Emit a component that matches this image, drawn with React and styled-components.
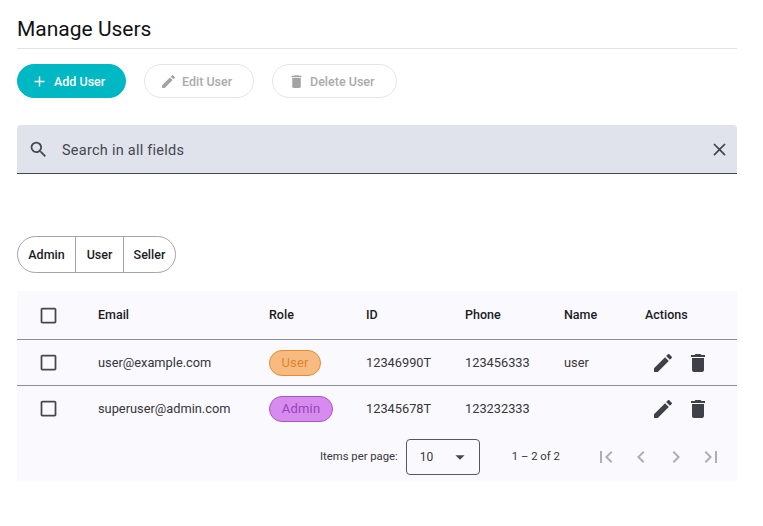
import React from 'react'
import styled, { createGlobalStyle } from 'styled-components'
import {
	MdAdd,
	MdArrowDropDown,
	MdCheckBoxOutlineBlank,
	MdChevronLeft,
	MdChevronRight,
	MdClose,
	MdDelete,
	MdEdit,
	MdFirstPage,
	MdLastPage,
	MdSearch,
} from 'react-icons/md'

const GlobalStyle = createGlobalStyle`
	html, body {
		margin: 0;
		background: #ffffff;
		font-family: Roboto, 'Liberation Sans', sans-serif;
	}
	* {
		box-sizing: border-box;
	}
`

const Page = styled.div`
	width: 763px;
	height: 526px;
	padding: 15px 26px 0 17px;
	overflow: hidden;
`

const Title = styled.h1`
	margin: 0;
	height: 34px;
	border-bottom: 1px solid #e3e3e6;
	font-size: 21px;
	line-height: 28px;
	font-weight: 400;
	color: #111114;
`

const Toolbar = styled.div`
	display: flex;
	gap: 18px;
	margin-top: 15px;
`

const ActionButton = styled.button`
	display: flex;
	align-items: center;
	height: 34px;
	width: ${props => props.$width}px;
	padding: 0 0 0 ${props => props.$pad}px;
	gap: ${props => props.$gap}px;
	border-radius: 17px;
	border: 1px solid ${props => (props.$primary ? '#00b8c4' : '#e6e6e9')};
	background: ${props => (props.$primary ? '#00b8c4' : '#ffffff')};
	color: ${props => (props.$primary ? '#ffffff' : '#aaaaad')};
	font-family: inherit;
	font-size: 12.5px;
	font-weight: 500;

	svg {
		font-size: 17px;
		color: ${props => (props.$primary ? '#ffffff' : '#a3a3a6')};
	}
`

const SearchBar = styled.div`
	display: flex;
	align-items: center;
	height: 49px;
	margin-top: 27px;
	padding: 1px 7px 0 11px;
	background: #e0e2ec;
	border-bottom: 1px solid #44474f;
	border-radius: 4px 4px 0 0;
	color: #44474f;

	svg {
		font-size: 21px;
		flex: none;
	}
`

const SearchText = styled.span`
	flex: 1;
	margin-left: 13px;
	padding-top: 2px;
	font-size: 14.5px;
	letter-spacing: 0.25px;
`

const RoleGroup = styled.div`
	display: flex;
	width: fit-content;
	height: 37px;
	margin-top: 62px;
	border: 1px solid #a4a4a9;
	border-radius: 19px;
	overflow: hidden;
`

const RoleOption = styled.div`
	display: flex;
	align-items: center;
	justify-content: center;
	width: ${props => props.$width}px;
	font-size: 12.5px;
	font-weight: 500;
	color: #1b1b1f;

	& + & {
		border-left: 1px solid #a4a4a9;
	}
`

const Table = styled.div`
	margin-top: 18px;
	background: #faf9fe;
`

const Row = styled.div`
	display: grid;
	grid-template-columns: 81px 171px 97px 99px 99px 81px 92px;
	align-items: center;
	height: ${props => props.$height}px;
	border-bottom: 1px solid ${props => (props.$last ? 'transparent' : '#8e8e94')};
	font-size: 12.8px;
	color: #36363b;
`

const HeadCell = styled.div`
	padding-bottom: 2px;
	font-size: 12.5px;
	font-weight: 500;
	color: #1b1b1f;
`

const CheckCell = styled.div`
	display: flex;
	justify-content: center;
	padding-right: 19px;
	color: #44474f;

	svg {
		font-size: 21px;
	}
`

const RoleBadge = styled.span`
	display: inline-flex;
	align-items: center;
	justify-content: center;
	height: 26px;
	width: ${props => props.$width}px;
	border-radius: 13px;
	border: 1px solid ${props => props.$border};
	background: ${props => props.$bg};
	color: ${props => props.$color};
	font-size: 13px;
	letter-spacing: 0.2px;
`

const ActionsCell = styled.div`
	display: flex;
	gap: 11px;
	padding-left: 6px;
	color: #3f4148;

	svg {
		font-size: 24px;
	}
`

const Pager = styled.div`
	display: flex;
	align-items: center;
	height: 49px;
	padding-left: 303px;
	font-size: 11.3px;
	color: #36363b;
`

const PageSize = styled.div`
	display: flex;
	align-items: center;
	justify-content: space-between;
	width: 74px;
	height: 36px;
	margin-left: 8px;
	padding: 0 8px 0 13px;
	border: 1px solid #55575e;
	border-radius: 4px;
	font-size: 12px;

	svg {
		font-size: 22px;
		color: #44474f;
	}
`

const PageRange = styled.span`
	margin-left: 32px;
`

const PageButtons = styled.div`
	display: flex;
	gap: 11px;
	margin-left: 34px;
	color: #aeafb4;

	svg {
		font-size: 24px;
	}
`

const users = [
	{
		email: 'user@example.com',
		role: 'User',
		id: '12346990T',
		phone: '123456333',
		name: 'user',
		badge: { $width: 52, $bg: '#f7bb82', $border: '#e58a2e', $color: '#e0832a' },
	},
	{
		email: 'superuser@admin.com',
		role: 'Admin',
		id: '12345678T',
		phone: '123232333',
		name: '',
		badge: { $width: 64, $bg: '#d78bee', $border: '#a855c4', $color: '#9a45b8' },
	},
]

const App = () => {
	return (
		<Page>
			<GlobalStyle />
			<Title>Manage Users</Title>
			<Toolbar>
				<ActionButton $primary $width={109} $pad={13} $gap={6}>
					<MdAdd />
					Add User
				</ActionButton>
				<ActionButton $width={110} $pad={15} $gap={5}>
					<MdEdit />
					Edit User
				</ActionButton>
				<ActionButton $width={125} $pad={15} $gap={5}>
					<MdDelete />
					Delete User
				</ActionButton>
			</Toolbar>
			<SearchBar>
				<MdSearch />
				<SearchText>Search in all fields</SearchText>
				<MdClose />
			</SearchBar>
			<RoleGroup>
				<RoleOption $width={57}>Admin</RoleOption>
				<RoleOption $width={48}>User</RoleOption>
				<RoleOption $width={52}>Seller</RoleOption>
			</RoleGroup>
			<Table>
				<Row $height={49}>
					<CheckCell>
						<MdCheckBoxOutlineBlank />
					</CheckCell>
					<HeadCell>Email</HeadCell>
					<HeadCell>Role</HeadCell>
					<HeadCell>ID</HeadCell>
					<HeadCell>Phone</HeadCell>
					<HeadCell>Name</HeadCell>
					<HeadCell>Actions</HeadCell>
				</Row>
				{users.map((user, index) => (
					<Row $height={46} $last={index === users.length - 1} key={user.id}>
						<CheckCell>
							<MdCheckBoxOutlineBlank />
						</CheckCell>
						<div>{user.email}</div>
						<div>
							<RoleBadge {...user.badge}>{user.role}</RoleBadge>
						</div>
						<div>{user.id}</div>
						<div>{user.phone}</div>
						<div>{user.name}</div>
						<ActionsCell>
							<MdEdit />
							<MdDelete />
						</ActionsCell>
					</Row>
				))}
				<Pager>
					<span>Items per page:</span>
					<PageSize>
						10
						<MdArrowDropDown />
					</PageSize>
					<PageRange>1 – 2 of 2</PageRange>
					<PageButtons>
						<MdFirstPage />
						<MdChevronLeft />
						<MdChevronRight />
						<MdLastPage />
					</PageButtons>
				</Pager>
			</Table>
		</Page>
	)
}

export default App
